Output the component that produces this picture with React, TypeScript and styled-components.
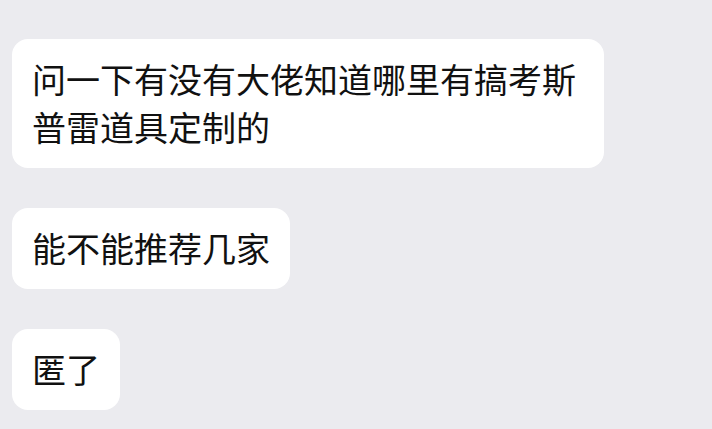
import styled, { createGlobalStyle } from 'styled-components';

const GlobalStyle = createGlobalStyle`
  html, body {
    margin: 0;
    padding: 0;
    background: #ebebef;
  }
  body {
    font-family: "Noto Sans CJK SC", "Noto Sans", sans-serif;
  }
`;

const messages = ['问一下有没有大佬知道哪里有搞考斯普雷道具定制的', '能不能推荐几家', '匿了'];

const App = () => {
  return (
    <>
      <GlobalStyle />
      <ChatList>
        {messages.map((text, index) => (
          <Bubble key={index}>{text}</Bubble>
        ))}
      </ChatList>
    </>
  );
};

const ChatList = styled.div`
  width: 712px;
  height: 429px;
  box-sizing: border-box;
  padding: 39px 108px 0 12px;
  display: flex;
  flex-direction: column;
  align-items: flex-start;
  gap: 40px;
  overflow: hidden;
`;

const Bubble = styled.div`
  background: #ffffff;
  border-radius: 16px;
  padding: 16px 20px 17px;
  font-size: 34px;
  line-height: 48px;
  color: #111111;
  max-width: 592px;
  box-sizing: border-box;
`;

export default App;
